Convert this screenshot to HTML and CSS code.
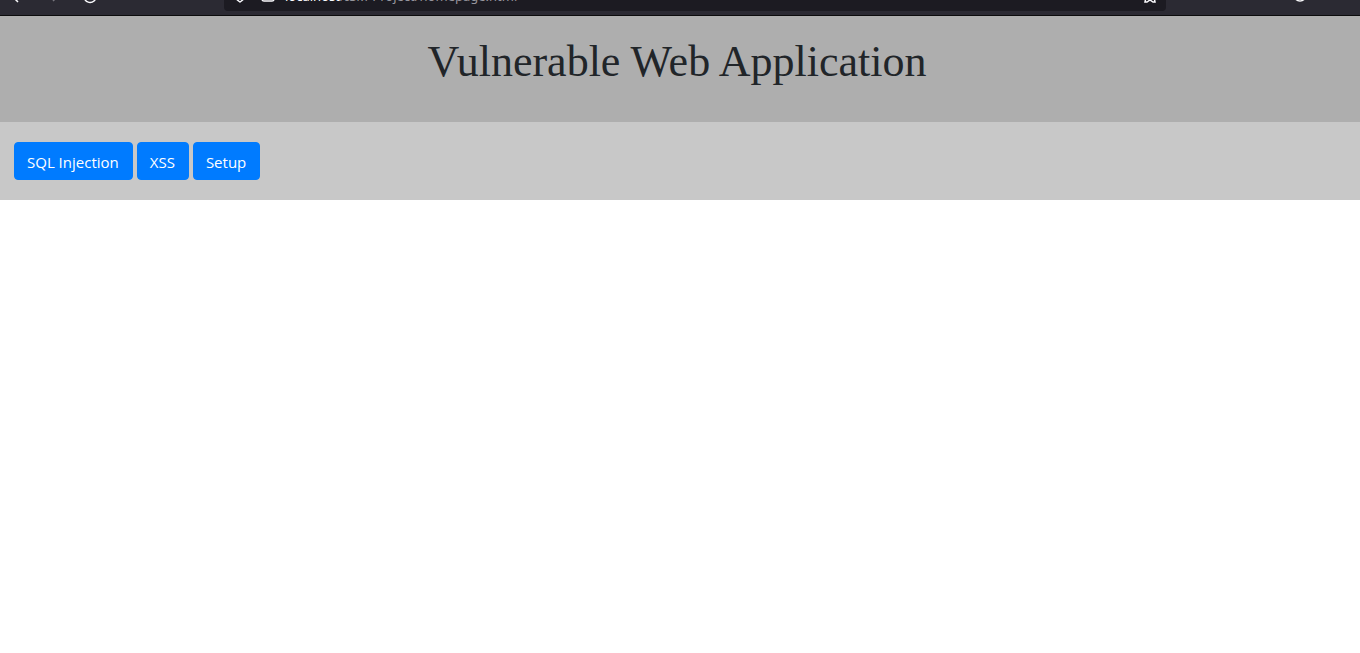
FILE: index.html
```html
<!DOCTYPE html>
<html lang="en">
<head>
<meta charset="utf-8">
<title>Vulnerable Web Application</title>
<link rel="stylesheet" href="styles.css">
</head>
<body>
<div class="toolbar">
  <div class="nav-tools">
    <button class="tool" aria-label="Back"><svg viewBox="0 0 16 16"><path d="M15 7H3M9 1L3 7l7 7"/></svg></button>
    <button class="tool dim" aria-label="Forward"><svg viewBox="0 0 16 16"><path d="M1 7h13M8 1l6 6-6 6"/></svg></button>
    <button class="tool" aria-label="Reload"><svg viewBox="0 0 16 16"><path d="M14 8a6 6 0 1 1-2-4l2 2V2"/></svg></button>
  </div>
  <div class="address">
    <svg class="icon" viewBox="0 0 16 16"><path d="M8 1l6 2v4c0 4-3 6-6 8-3-2-6-4-6-8V3z"/></svg>
    <svg class="icon" viewBox="0 0 16 16"><rect x="2" y="7" width="12" height="7" rx="2"/><path d="M5 7V4a3 3 0 0 1 6 0v3"/></svg>
    <span class="url"><span class="host">localhost</span>/ISM-Project/homepage.html</span>
    <button class="tool" aria-label="Bookmark"><svg viewBox="0 0 16 16"><path d="M8 1l2 5h5l-3 4 1 5h-2l-3-2-3 2H3l1-5-3-4h5z"/></svg></button>
  </div>
  <div class="side-tools">
    <button class="tool" aria-label="Account"><svg viewBox="0 0 16 16"><circle cx="8" cy="7" r="6"/><path d="M5 11q3-2 6 0"/></svg></button>
  </div>
</div>
<header class="banner"><h1>Vulnerable Web Application</h1></header>
<nav class="menu">
  <button class="btn">SQL Injection</button>
  <button class="btn">XSS</button>
  <button class="btn">Setup</button>
</nav>
</body>
</html>
```
FILE: styles.css
```css
* { box-sizing: border-box; }
body { margin: 0; background: #fff; color: #212529; font-family: "Noto Sans", sans-serif; font-size: 16px; }
.toolbar { display: flex; align-items: flex-end; height: 16px; padding-bottom: 4px; overflow: hidden; background: #2b2a33; border-bottom: 1px solid #0c0c0d; }
.nav-tools { display: flex; gap: 21px; width: 224px; padding: 0 8px 7px; }
.tool { flex: none; width: 16px; height: 16px; padding: 0; border: 0; background: none; color: #fbfbfe; }
.tool svg, .icon { display: block; flex: none; width: 16px; height: 16px; fill: none; stroke: currentColor; stroke-width: 1.5; }
.dim { color: #77767e; }
.address { display: flex; align-items: center; flex: 1; gap: 12px; height: 32px; padding: 0 8px; border-radius: 4px; background: #1c1b22; color: #fbfbfe; }
.url { flex: 1; margin-left: -3px; padding-top: 2px; color: #96959d; font-size: 13px; line-height: 20px; }
.host { color: #fbfbfe; }
.side-tools { width: 194px; padding: 0 0 7px 126px; }
.side-tools .tool { display: block; }
.banner { height: 106px; padding-top: 21px; background: #aeaeae; text-align: center; }
h1 { margin: 0; padding-right: 6px; font: 400 44px/50px "Liberation Serif", serif; }
.menu { display: flex; gap: 4px; padding: 20px 14px; background: #c8c8c8; }
.btn { height: 38px; padding: 2px 13px 0 12px; border: 1px solid #007bff; border-radius: 4px; background: #007bff; color: #fff; font: 400 15px/24px "Open Sans", sans-serif; }
```
